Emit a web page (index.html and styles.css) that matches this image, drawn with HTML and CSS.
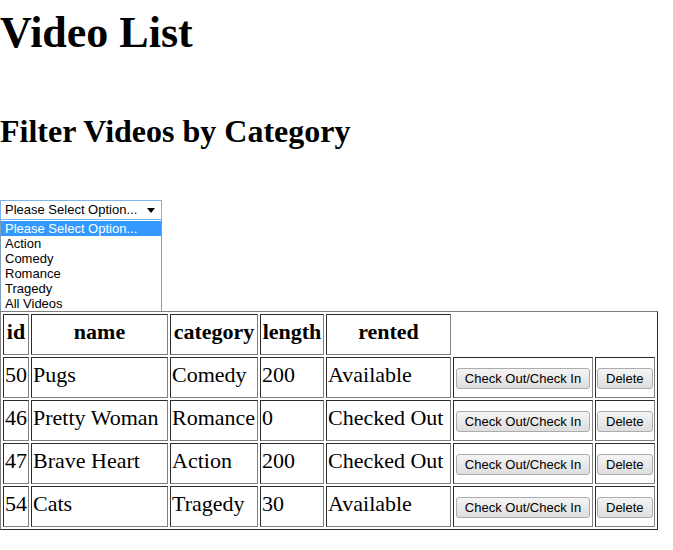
FILE: index.html
```html
<!DOCTYPE html>
<html>
<head>
<meta charset="utf-8">
<title>Video List</title>
<link rel="stylesheet" href="styles.css">
</head>
<body>
<h1 class="title">Video List</h1>
<h2 class="subtitle">Filter Videos by Category</h2>
<div class="filter">
  <div class="select">
    <span class="select-text">Please Select Option...</span>
    <svg class="select-arrow" width="8" height="5" viewBox="0 0 8 5"><polygon points="0,0 8,0 4,5" fill="#000"/></svg>
  </div>
  <ul class="options">
    <li class="option selected">Please Select Option...</li>
    <li class="option">Action</li>
    <li class="option">Comedy</li>
    <li class="option">Romance</li>
    <li class="option">Tragedy</li>
    <li class="option">All Videos</li>
  </ul>
</div>
<table class="videos">
  <tr>
    <th>id</th>
    <th>name</th>
    <th>category</th>
    <th>length</th>
    <th>rented</th>
  </tr>
  <tr>
    <td>50</td><td>Pugs</td><td>Comedy</td><td>200</td><td>Available</td>
    <td class="btn-cell"><button class="btn">Check Out/Check In</button></td>
    <td class="btn-cell"><button class="btn">Delete</button></td>
  </tr>
  <tr>
    <td>46</td><td>Pretty Woman</td><td>Romance</td><td>0</td><td>Checked Out</td>
    <td class="btn-cell"><button class="btn">Check Out/Check In</button></td>
    <td class="btn-cell"><button class="btn">Delete</button></td>
  </tr>
  <tr>
    <td>47</td><td>Brave Heart</td><td>Action</td><td>200</td><td>Checked Out</td>
    <td class="btn-cell"><button class="btn">Check Out/Check In</button></td>
    <td class="btn-cell"><button class="btn">Delete</button></td>
  </tr>
  <tr>
    <td>54</td><td>Cats</td><td>Tragedy</td><td>30</td><td>Available</td>
    <td class="btn-cell"><button class="btn">Check Out/Check In</button></td>
    <td class="btn-cell"><button class="btn">Delete</button></td>
  </tr>
</table>
</body>
</html>
```
FILE: styles.css
```css
body {
  margin: 0;
  font-family: "Liberation Serif", "Times New Roman", serif;
  color: #000;
  background: #fff;
}

.title {
  margin: 8px 0 0;
  font-size: 44px;
  line-height: 50px;
  font-weight: bold;
}

.subtitle {
  margin: 53px 0 0;
  font-size: 32px;
  line-height: 40px;
  font-weight: bold;
}

.filter {
  margin-top: 49px;
  width: 162px;
  font-family: "Liberation Sans", Arial, sans-serif;
  font-size: 13px;
}

.select {
  box-sizing: border-box;
  height: 20px;
  border: 1px solid #7eb4ea;
  display: flex;
  align-items: center;
  justify-content: space-between;
  padding: 0 6px 0 4px;
  line-height: 18px;
}

.select-arrow {
  display: block;
}

.options {
  list-style: none;
  margin: 0;
  padding: 1px 0 0;
  box-sizing: border-box;
  height: 91px;
  border-left: 1px solid #7f9db9;
  border-right: 1px solid #7f9db9;
  overflow: hidden;
}

.option {
  line-height: 15px;
  height: 15px;
  padding-left: 4px;
  color: #000;
}

.option.selected {
  background: #3399ff;
  color: #fff;
}

.videos {
  border: 1px outset #808080;
  border-spacing: 2px;
  font-size: 22px;
}

.videos th,
.videos td {
  border: 1px inset #808080;
  padding: 0 1px 6px;
  height: 33px;
  line-height: 26px;
  vertical-align: middle;
  white-space: nowrap;
}

.videos th {
  font-weight: bold;
  text-align: center;
}

.videos td {
  text-align: left;
}

.videos th:nth-child(1), .videos td:nth-child(1) { width: 22px; }
.videos th:nth-child(2), .videos td:nth-child(2) { width: 133px; }
.videos th:nth-child(3), .videos td:nth-child(3) { width: 84px; }
.videos th:nth-child(4), .videos td:nth-child(4) { width: 60px; }
.videos th:nth-child(5), .videos td:nth-child(5) { width: 121px; }
.videos td:nth-child(6) { width: 136px; }
.videos td:nth-child(7) { width: 55px; }

.videos td.btn-cell {
  padding: 1px;
  height: 37px;
  text-align: center;
  font-size: 13px;
  line-height: 21px;
}

.btn {
  font-family: "Liberation Sans", Arial, sans-serif;
  font-size: 13px;
  color: #000;
  height: 21px;
  margin: 0;
  padding: 0 8px;
  border: 1px solid #acacac;
  border-radius: 3px;
  background: linear-gradient(#f4f4f4, #dedede);
  line-height: 19px;
  vertical-align: middle;
}
```
